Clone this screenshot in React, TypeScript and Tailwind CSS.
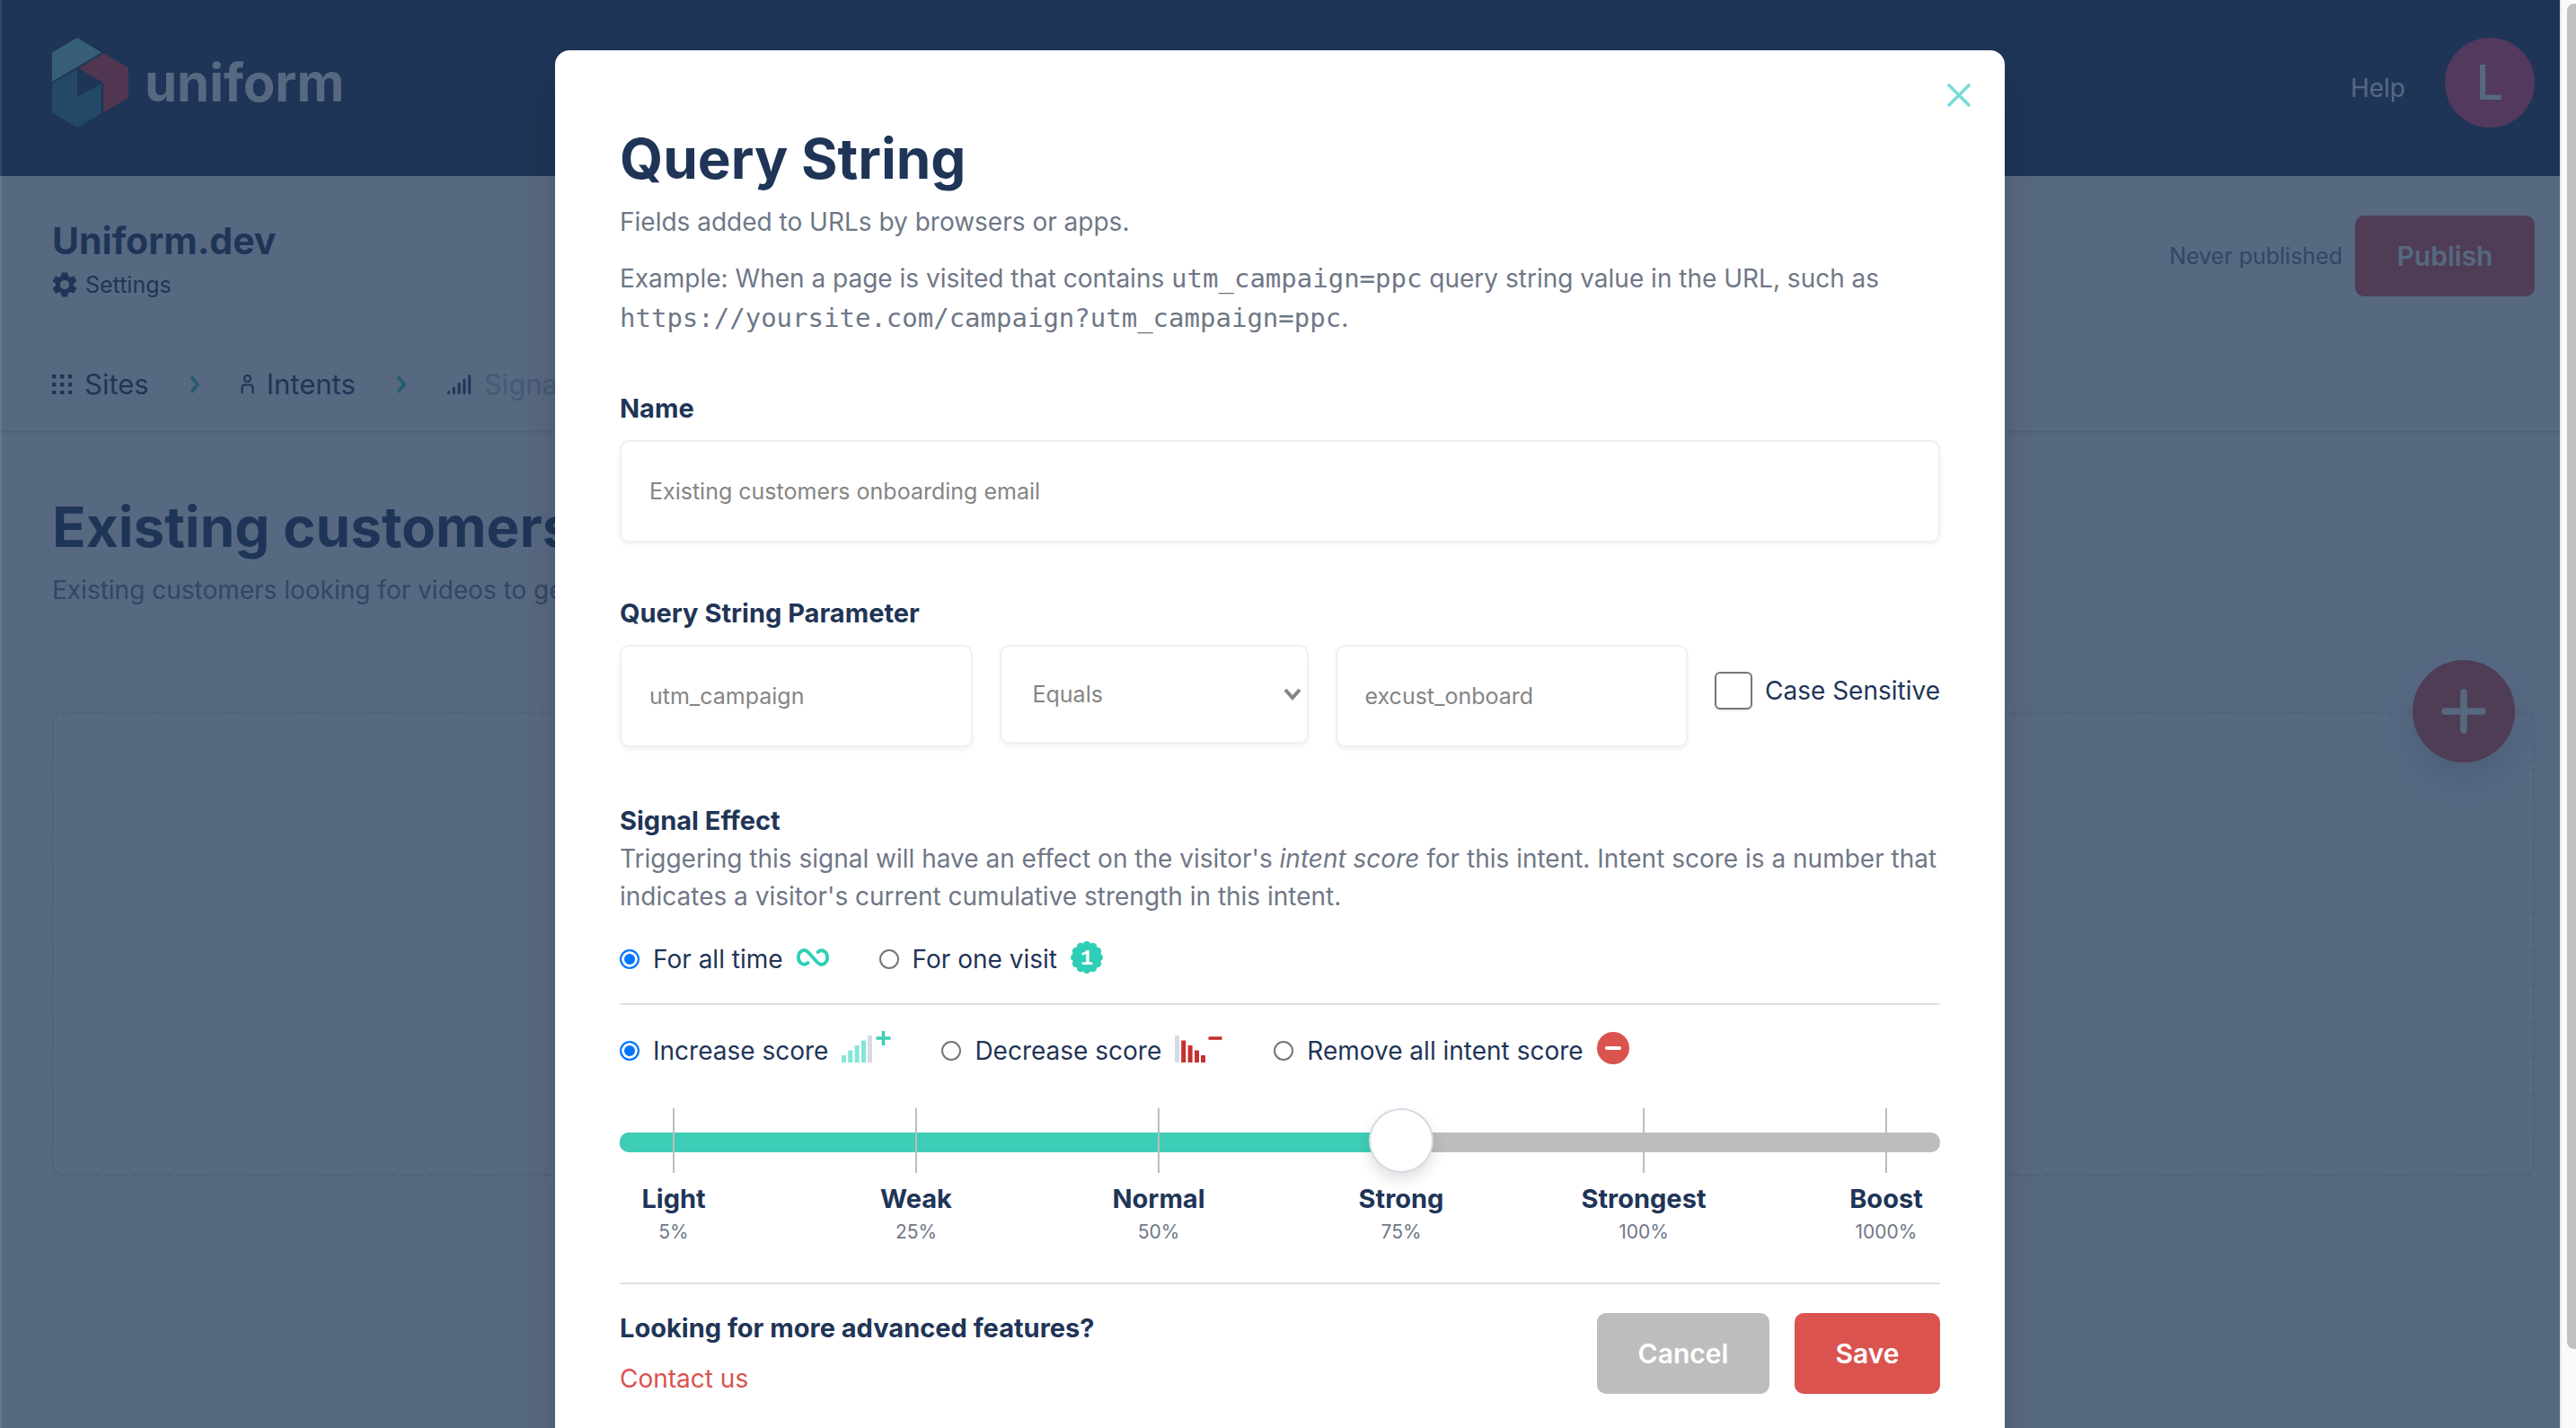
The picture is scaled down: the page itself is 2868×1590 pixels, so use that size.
import React, { useState } from "react";
import { MdSettings } from "react-icons/md";

interface StrengthLevel {
  label: string;
  score: string;
}

const STRENGTHS: StrengthLevel[] = [
  { label: "Light", score: "5%" },
  { label: "Weak", score: "25%" },
  { label: "Normal", score: "50%" },
  { label: "Strong", score: "75%" },
  { label: "Strongest", score: "100%" },
  { label: "Boost", score: "1000%" },
];

const fieldClass =
  "rounded-[10px] border-2 border-[#f0f0f0] bg-white text-[25px] text-[#858585] shadow-[0_3px_5px_rgba(0,0,0,0.05)] outline-none";
const radioClass =
  "m-0 size-[22px] shrink-0 appearance-none rounded-full border-2 border-[#767676] bg-white checked:border-[#0075ff] checked:bg-[#0075ff] checked:shadow-[inset_0_0_0_3px_#fff]";
const codeClass = "font-['DejaVu_Sans_Mono',monospace] text-[29px]";

/* ---------- Icons ---------- */

const Logo = () => (
  <svg width="85" height="100" viewBox="0 0 85 100" aria-hidden="true">
    <path d="M28 0L55 16.500L0 49V16.500Z" fill="#7bdad8" />
    <path d="M57.500 17.500L85 33.500V67L57 83.500V50L29.500 34Z" fill="#e63946" />
    <path d="M28 35V66L55 51V84L28 100L0 83.500V51Z" fill="#36809c" />
  </svg>
);

const GridIcon = () => (
  <svg width="22" height="22" viewBox="0 0 22 22" fill="currentColor" aria-hidden="true">
    {[0, 9, 18].map((y) =>
      [0, 9, 18].map((x) => <rect key={`${x}-${y}`} x={x} y={y} width="4.400" height="4.400" />)
    )}
  </svg>
);

const PersonIcon = () => (
  <svg width="15" height="22" viewBox="0 0 15 22" fill="none" stroke="currentColor" strokeWidth="2.200" aria-hidden="true">
    <circle cx="7.500" cy="4.500" r="3.500" />
    <path d="M1.500 21V14.500A3 3 0 0 1 4.500 11.500H10.500A3 3 0 0 1 13.500 14.500V21" />
  </svg>
);

const SignalIcon = () => (
  <svg width="27" height="22" viewBox="0 0 27 22" stroke="currentColor" strokeWidth="3" strokeLinecap="round" aria-hidden="true">
    <path d="M1.500 19.500V20.500M7.300 15V20.500M13.100 10.500V20.500M18.900 6V20.500M24.700 1.500V20.500" />
  </svg>
);

const ChevronIcon = () => (
  <svg width="12" height="20" viewBox="0 0 12 20" fill="none" stroke="#3ecdb6" strokeWidth="4" aria-hidden="true">
    <path d="M2 1.500L9 10L2 18.500" />
  </svg>
);

const InfinityIcon = () => (
  <svg width="36" height="20" viewBox="0 0 36 20" fill="none" stroke="#2fceb6" strokeWidth="3.800" strokeLinecap="round" className="mb-1" aria-hidden="true">
    <path d="M12.500 16C7.500 20 1.900 16.500 1.900 10C1.900 3 8.500 -.5 13 4.500L23 15.500C27.500 20.500 34.100 17 34.100 10C34.100 3.500 28.500 0 23.500 4" />
  </svg>
);

const OneBadgeIcon = () => (
  <svg width="36" height="36" viewBox="0 0 36 36" className="mb-1" aria-hidden="true">
    <g fill="#2fceb6">
      <circle cx="18" cy="18" r="15" />
      {Array.from({ length: 12 }, (_, i) => (
        <circle
          key={i}
          cx={18 + 13.6 * Math.sin((i * Math.PI) / 6)}
          cy={18 - 13.6 * Math.cos((i * Math.PI) / 6)}
          r="4.400"
        />
      ))}
    </g>
    <text x="18" y="26" textAnchor="middle" fill="#fff" fontSize="24" fontWeight="700" fontFamily="'Liberation Mono', monospace">
      1
    </text>
  </svg>
);

const IncreaseIcon = () => (
  <svg width="55" height="36" viewBox="0 0 55 36" className="mb-2.5" aria-hidden="true">
    <g fill="#83e6d7">
      <rect x="0" y="28" width="5" height="8" />
      <rect x="7.200" y="22.500" width="5" height="13.500" />
      <rect x="14.600" y="17" width="5" height="19" />
      <rect x="22" y="11.500" width="5" height="24.500" />
    </g>
    <rect x="29" y="6" width="5" height="30" fill="#d5dbe3" />
    <path d="M38.500 9H54.500M46.500 1V17" stroke="#3ecdb6" strokeWidth="3.400" />
  </svg>
);

const DecreaseIcon = () => (
  <svg width="54" height="36" viewBox="0 0 54 36" className="mb-2.5" aria-hidden="true">
    <rect x="0" y="6" width="5" height="30" fill="#d5dbe3" />
    <g fill="#c53030">
      <rect x="7.200" y="11.500" width="5" height="24.500" />
      <rect x="14.600" y="17" width="5" height="19" />
      <rect x="22" y="22.500" width="5" height="13.500" />
      <rect x="29" y="28" width="5" height="8" />
    </g>
    <path d="M37.500 9H52.500" stroke="#c53030" strokeWidth="3.600" />
  </svg>
);

const RemoveIcon = () => (
  <svg width="36" height="36" viewBox="0 0 36 36" className="mb-1.5" aria-hidden="true">
    <circle cx="18" cy="18" r="18" fill="#da534f" />
    <path d="M11 18H25" stroke="#fff" strokeWidth="4" strokeLinecap="round" />
  </svg>
);

/* ---------- Small parts ---------- */

interface RadioOptionProps {
  name: string;
  label: string;
  checked: boolean;
  onSelect: () => void;
  icon: React.ReactNode;
}

const RadioOption: React.FC<RadioOptionProps> = ({ name, label, checked, onSelect, icon }) => (
  <label className="flex h-[42px] items-center gap-[15px]">
    <input type="radio" name={name} checked={checked} onChange={onSelect} className={radioClass} />
    <span>{label}</span>
    {icon}
  </label>
);

interface StrengthSliderProps {
  value: number;
  onChange: (value: number) => void;
}

const StrengthSlider: React.FC<StrengthSliderProps> = ({ value, onChange }) => {
  const last = STRENGTHS.length - 1;
  const filled = 4 + (value / last) * 92;

  return (
    <div className="mt-[43px]">
      <div className="grid h-[72px] items-center">
        <div className="col-start-1 row-start-1 mt-1 h-[22px] overflow-hidden rounded-[10px] bg-[#bdbdbd]">
          <div className="h-full bg-[#3ecdb6]" style={{ width: `${filled}%` }} />
        </div>
        <div className="col-start-1 row-start-1 flex h-full justify-between px-[59px]">
          {STRENGTHS.map((s) => (
            <span key={s.label} className="w-0.5 bg-[#bdbdbd]" />
          ))}
        </div>
        <div className="col-start-1 row-start-1 px-6">
          <input
            type="range"
            aria-label="Signal strength"
            min={0}
            max={last}
            step={1}
            value={value}
            onChange={(e) => onChange(Number(e.target.value))}
            className="block h-[72px] w-full appearance-none bg-transparent outline-none [&::-webkit-slider-thumb]:size-[72px] [&::-webkit-slider-thumb]:appearance-none [&::-webkit-slider-thumb]:rounded-full [&::-webkit-slider-thumb]:border-2 [&::-webkit-slider-thumb]:border-[#d5dbe3] [&::-webkit-slider-thumb]:bg-white [&::-webkit-slider-thumb]:shadow-[0_8px_16px_rgba(0,0,0,0.12)]"
          />
        </div>
      </div>
      <div className="mt-2 flex justify-between px-[59px]">
        {STRENGTHS.map((s) => (
          <div key={s.label} className="flex w-0.5 flex-col items-center whitespace-nowrap">
            <span className="text-[29px] font-bold">{s.label}</span>
            <span className="text-[21px] leading-8 text-[#6f7787]">{s.score}</span>
          </div>
        ))}
      </div>
    </div>
  );
};

/* ---------- Page behind the dialog ---------- */

const IntentPage = () => (
  <div className="min-w-0 flex-1 bg-white">
    <header className="flex items-start justify-between bg-[#1f3557] pt-[42px] pr-7 pb-[54px] pl-[58px] text-white">
      <a href="#" className="flex items-center gap-[18px]">
        <Logo />
        <span className="text-[58px] leading-[72px] font-bold">uniform</span>
      </a>
      <div className="flex items-center gap-11">
        <a href="#help" className="pt-3">Help</a>
        <button type="button" className="size-[100px] rounded-full bg-[#ef4573] text-[54px] font-medium">
          L
        </button>
      </div>
    </header>

    <div className="flex items-start justify-between bg-[#fdfdfd] py-11 pr-7 pl-[58px]">
      <div>
        <h2 className="text-[41px] leading-14 font-bold">Uniform.dev</h2>
        <a href="#settings" className="mt-1.5 flex h-[30px] items-center gap-1.5 text-[25px] leading-[30px]">
          <MdSettings size={34} className="-ml-[3px]" />
          Settings
        </a>
      </div>
      <div className="flex items-center gap-3.5">
        <span className="text-[25px] text-[#6f7787]">Never published</span>
        <button type="button" className="h-[90px] w-[200px] rounded-[10px] bg-[#da534f] text-[30px] font-semibold text-white">
          Publish
        </button>
      </div>
    </div>

    <nav className="flex h-[106px] items-center gap-[45px] border-b-2 border-[#e2e4ea] pr-7 pl-[58px] text-[31px] leading-[48px]">
      <a href="#sites" className="flex items-center gap-3.5"><GridIcon />Sites</a>
      <ChevronIcon />
      <a href="#intents" className="flex items-center gap-3.5"><PersonIcon />Intents</a>
      <ChevronIcon />
      <a href="#signals" className="flex items-center gap-3.5">
        <SignalIcon />
        <span className="text-[#bcc3ce]">Signals</span>
      </a>
    </nav>

    <main className="pt-16 pr-7 pl-[58px]">
      <h1 className="text-[62px] leading-[82px] font-bold">Existing customers</h1>
      <p className="mt-2 text-[#6f7787]">Existing customers looking for videos to get started</p>
      <div className="relative mt-[114px] h-[518px] rounded-xl border-2 border-dashed border-[#dcdfe8]">
        <button
          type="button"
          aria-label="Add signal"
          className="absolute -top-[59px] right-5 flex size-[114px] items-center justify-center rounded-full bg-[#da534f] shadow-[0_20px_40px_rgba(40,70,140,0.22)]"
        >
          <svg width="50" height="50" viewBox="0 0 50 50" stroke="#fff" strokeWidth="7.500" strokeLinecap="round" aria-hidden="true">
            <path d="M25 4V46M4 25H46" />
          </svg>
        </button>
      </div>
    </main>
  </div>
);

/* ---------- Dialog ---------- */

const QueryStringDialog = () => {
  const [duration, setDuration] = useState("all");
  const [effect, setEffect] = useState("increase");
  const [strength, setStrength] = useState(3);

  return (
    <form
      role="dialog"
      aria-labelledby="dialog-title"
      className="relative w-full max-w-[1614px] self-start rounded-2xl bg-white px-[72px] py-20 shadow-2xl"
    >
      <button type="button" aria-label="Close" className="absolute top-[37px] right-[38px]">
        <svg width="26" height="26" viewBox="0 0 26 26" stroke="#7adbd9" strokeWidth="3.600" strokeLinecap="round" aria-hidden="true">
          <path d="M2 2L24 24M24 2L2 24" />
        </svg>
      </button>

      <h1 id="dialog-title" className="text-[62px] leading-[82px] font-bold">Query String</h1>
      <p className="mt-2 text-[#6f7787]">Fields added to URLs by browsers or apps.</p>
      <p className="mt-5 leading-11 text-[#6f7787]">
        Example: When a page is visited that contains <code className={codeClass}>utm_campaign=ppc</code> query string value in the
        URL, such as <code className={codeClass}>https://yoursite.com/campaign?utm_campaign=ppc</code>.
      </p>

      <label htmlFor="signal-name" className="mt-[58px] block text-[29px] font-bold">Name</label>
      <input
        id="signal-name"
        type="text"
        defaultValue="Existing customers onboarding email"
        className={`${fieldClass} mt-3.5 block h-[114px] w-full px-[31px]`}
      />

      <label htmlFor="param-name" className="mt-[58px] block text-[29px] font-bold">Query String Parameter</label>
      <div className="mt-3.5 flex items-start gap-[30px]">
        <input id="param-name" type="text" defaultValue="utm_campaign" className={`${fieldClass} h-[114px] min-w-0 flex-1 px-[31px]`} />
        <div className="relative w-[344px]">
          <select aria-label="Match type" defaultValue="equals" className={`${fieldClass} block h-[110px] w-full appearance-none px-[35px]`}>
            <option value="equals">Equals</option>
            <option value="contains">Contains</option>
          </select>
          <svg width="20" height="14" viewBox="0 0 20 14" fill="none" stroke="#858585" strokeWidth="4" className="pointer-events-none absolute top-12 right-2" aria-hidden="true">
            <path d="M2 2L10 11L18 2" />
          </svg>
        </div>
        <input aria-label="Parameter value" type="text" defaultValue="excust_onboard" className={`${fieldClass} h-[114px] min-w-0 flex-1 px-[31px]`} />
        <label className="mt-[30px] flex items-center gap-3.5">
          <input type="checkbox" className="m-0 size-[42px] appearance-none rounded-md border-2 border-[#767676] bg-white shadow-sm" />
          Case Sensitive
        </label>
      </div>

      <h2 className="mt-[61px] text-[29px] font-bold">Signal Effect</h2>
      <p className="text-[#6f7787]">
        Triggering this signal will have an effect on the visitor's <em>intent score</em> for this intent. Intent score is a number that
        indicates a visitor's current cumulative strength in this intent.
      </p>

      <div className="flex gap-14 border-b-2 border-[#e0e0e0] py-7">
        <RadioOption name="duration" label="For all time" checked={duration === "all"} onSelect={() => setDuration("all")} icon={<InfinityIcon />} />
        <RadioOption name="duration" label="For one visit" checked={duration === "one"} onSelect={() => setDuration("one")} icon={<OneBadgeIcon />} />
      </div>
      <div className="mt-[30px] flex gap-14">
        <RadioOption name="effect" label="Increase score" checked={effect === "increase"} onSelect={() => setEffect("increase")} icon={<IncreaseIcon />} />
        <RadioOption name="effect" label="Decrease score" checked={effect === "decrease"} onSelect={() => setEffect("decrease")} icon={<DecreaseIcon />} />
        <RadioOption name="effect" label="Remove all intent score" checked={effect === "remove"} onSelect={() => setEffect("remove")} icon={<RemoveIcon />} />
      </div>

      <StrengthSlider value={strength} onChange={setStrength} />

      <div className="mt-10 flex items-center justify-between border-t-2 border-[#e0e0e0] pt-7">
        <div>
          <p className="text-[29px] font-bold">Looking for more advanced features?</p>
          <a href="#contact" className="mt-3.5 block text-[#da534f]">Contact us</a>
        </div>
        <div className="flex gap-7 text-[30px] font-semibold text-white">
          <button type="button" className="h-[90px] w-[192px] rounded-[10px] bg-[#bdbdbd]">Cancel</button>
          <button type="button" className="h-[90px] w-[162px] rounded-[10px] bg-[#da534f]">Save</button>
        </div>
      </div>
    </form>
  );
};

export default function App() {
  return (
    <div className="flex h-screen overflow-hidden font-['Inter',sans-serif] text-[28px] leading-[42px] text-[#1f3557]">
      <div className="relative flex min-w-0 flex-1">
        <IntentPage />
        <div className="absolute inset-0 flex justify-center overflow-hidden border-l-2 border-white/10 bg-[#1f3557]/75 pt-14 pr-0.5">
          <QueryStringDialog />
        </div>
      </div>
      {/* Scrollbar */}
      <div className="w-[18px] border-l-2 border-[#e8e8e8] bg-[#fafafa] pt-1 pb-[88px] pl-1.5">
        <div className="h-full rounded-l-lg bg-[#c1c1c1]" />
      </div>
    </div>
  );
}
